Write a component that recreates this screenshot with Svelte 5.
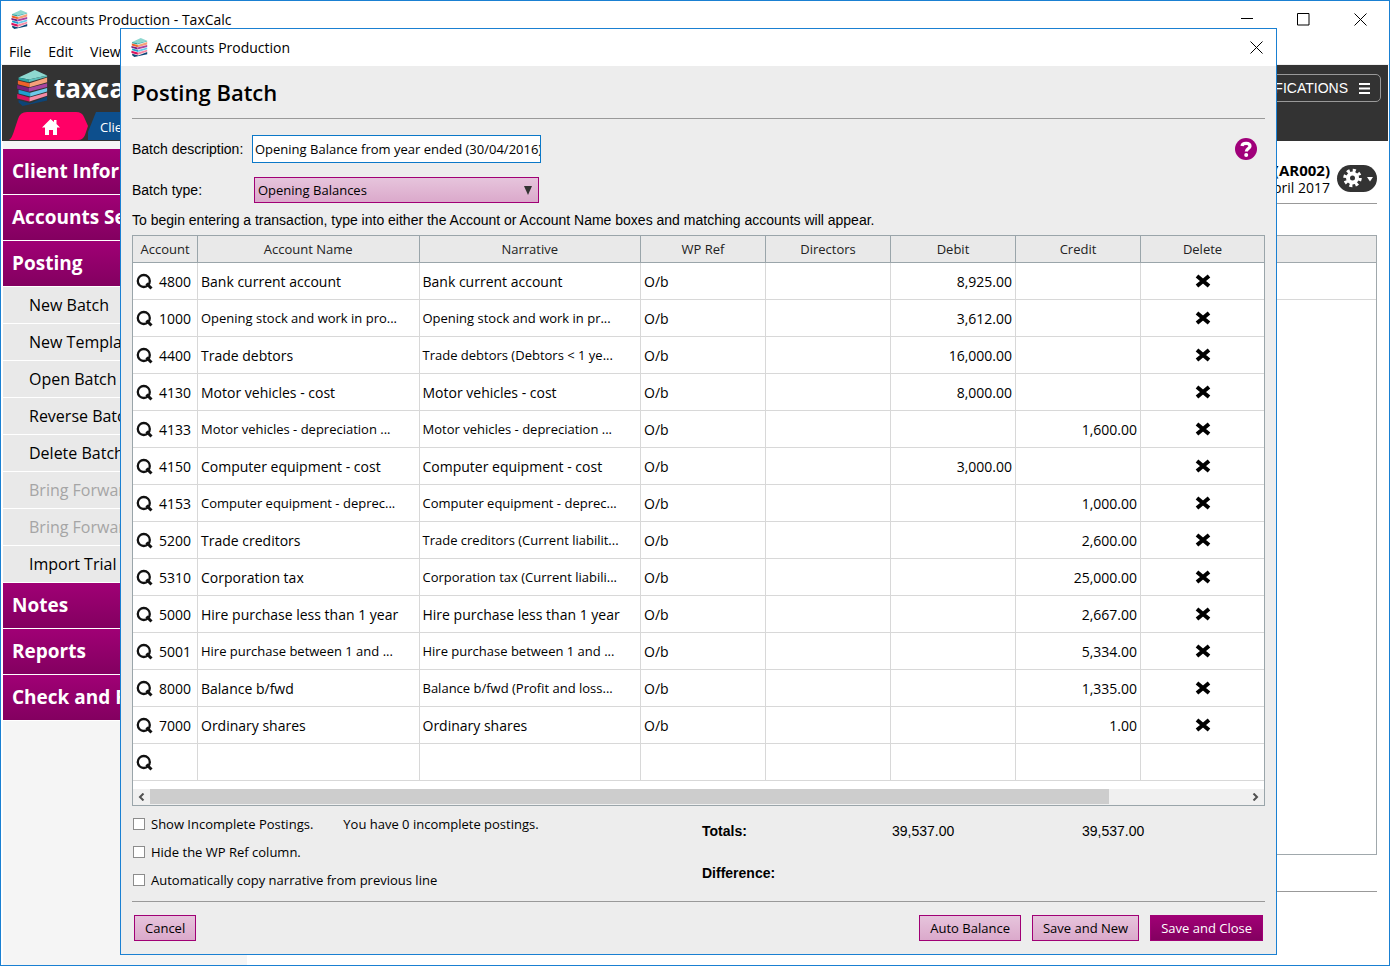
<script lang="ts">
	const menus = ['File', 'Edit', 'View'];

	const topSections = ['Client Information', 'Accounts Setup', 'Posting'];
	const postingItems = [
		{ label: 'New Batch' },
		{ label: 'New Template' },
		{ label: 'Open Batch' },
		{ label: 'Reverse Batch' },
		{ label: 'Delete Batch' },
		{ label: 'Bring Forward', disabled: true },
		{ label: 'Bring Forward', disabled: true },
		{ label: 'Import Trial' }
	];
	const bottomSections = ['Notes', 'Reports', 'Check and File'];

	const columns = ['Account', 'Account Name', 'Narrative', 'WP Ref', 'Directors', 'Debit', 'Credit', 'Delete'];

	const rows = [
		{ code: '4800', name: 'Bank current account', narrative: 'Bank current account', debit: '8,925.00', credit: '' },
		{ code: '1000', name: 'Opening stock and work in pro...', narrative: 'Opening stock and work in pr...', debit: '3,612.00', credit: '' },
		{ code: '4400', name: 'Trade debtors', narrative: 'Trade debtors (Debtors < 1 ye...', debit: '16,000.00', credit: '' },
		{ code: '4130', name: 'Motor vehicles - cost', narrative: 'Motor vehicles - cost', debit: '8,000.00', credit: '' },
		{ code: '4133', name: 'Motor vehicles - depreciation ...', narrative: 'Motor vehicles - depreciation ...', debit: '', credit: '1,600.00' },
		{ code: '4150', name: 'Computer equipment - cost', narrative: 'Computer equipment - cost', debit: '3,000.00', credit: '' },
		{ code: '4153', name: 'Computer equipment - deprec...', narrative: 'Computer equipment - deprec...', debit: '', credit: '1,000.00' },
		{ code: '5200', name: 'Trade creditors', narrative: 'Trade creditors (Current liabilit...', debit: '', credit: '2,600.00' },
		{ code: '5310', name: 'Corporation tax', narrative: 'Corporation tax (Current liabili...', debit: '', credit: '25,000.00' },
		{ code: '5000', name: 'Hire purchase less than 1 year', narrative: 'Hire purchase less than 1 year', debit: '', credit: '2,667.00' },
		{ code: '5001', name: 'Hire purchase between 1 and ...', narrative: 'Hire purchase between 1 and ...', debit: '', credit: '5,334.00' },
		{ code: '8000', name: 'Balance b/fwd', narrative: 'Balance b/fwd (Profit and loss...', debit: '', credit: '1,335.00' },
		{ code: '7000', name: 'Ordinary shares', narrative: 'Ordinary shares', debit: '', credit: '1.00' }
	];

	let description = $state('Opening Balance from year ended (30/04/2016)');
	let batchType = $state('Opening Balances');
	let showIncomplete = $state(false);
	let hideWpRef = $state(false);
	let copyNarrative = $state(false);
</script>

{#snippet logo(width: number, height: number)}
	<svg {width} {height} viewBox="0 0 90 106" aria-hidden="true">
		<path fill="#0d4577" d="M4 88 38 98 88 78V90L16 106 4 96z" />
		<path fill="#8ed8d0" d="M4 22 52 0 88 16 34 28z" />
		<path fill="#2fa39f" d="M4 22 34 28V36L4 29z" />
		<path fill="#5cbfba" d="M34 28 88 16V20L34 36z" />
		<path fill="#f0622a" d="M2 31 36 39V51L2 42z" />
		<path fill="#f6a07a" d="M36 39 88 22V36L36 51z" />
		<path fill="#7a1f7c" d="M0 44 34 53V64L0 55z" />
		<path fill="#a8449f" d="M34 53 88 39V50L34 64z" />
		<path fill="#1f9fd0" d="M4 58 38 67V78L4 69z" />
		<path fill="#6cc9ea" d="M38 67 88 53V63L38 78z" />
		<path fill="#d9145f" d="M0 71 36 81V93L0 84z" />
		<path fill="#f58aa5" d="M36 81 88 66V76L36 93z" />
	</svg>
{/snippet}

{#snippet cross()}
	<svg width="13" height="13" viewBox="0 0 13 13" aria-hidden="true">
		<path d="M.5 .5 12.5 12.5M12.5 .5 .5 12.5" fill="none" stroke="#000" />
	</svg>
{/snippet}

{#snippet lookup()}
	<button class="icon-button" aria-label="Find account">
		<svg width="17" height="17" viewBox="0 0 17 17" aria-hidden="true">
			<circle cx="7.800" cy="8" r="6" fill="none" stroke="#111" stroke-width="2.300" />
			<path d="M10.500 10.500 15.500 15.500" stroke="#111" stroke-width="3" />
		</svg>
	</button>
{/snippet}

<div class="desktop">
	<div class="window">
		<header class="titlebar">
			{@render logo(17, 19)}
			<span>Accounts Production - TaxCalc</span>
			<div class="controls">
				<button class="icon-button" aria-label="Minimise">
					<svg width="13" height="13" viewBox="0 0 13 13"><path d="M1 5.500H13" stroke="#000" /></svg>
				</button>
				<button class="icon-button" aria-label="Maximise">
					<svg width="13" height="13" viewBox="0 0 13 13"><path d="M.5 .5H12V12H.5z" fill="none" stroke="#000" /></svg>
				</button>
				<button class="icon-button" aria-label="Close window">{@render cross()}</button>
			</div>
		</header>

		<nav class="menubar">
			{#each menus as menu}
				<button>{menu}</button>
			{/each}
		</nav>

		<div class="banner">
			<div class="brand">
				{@render logo(31, 36)}
				<strong>taxcalc</strong>
				<button class="notifications">
					NOTIFICATIONS
					<svg width="11" height="11" viewBox="0 0 11 11" aria-hidden="true">
						<path d="M0 1H11M0 5.500H11M0 10H11" stroke="#fff" stroke-width="2" />
					</svg>
				</button>
			</div>
			<nav class="tabs">
				<a class="home" href="#home" aria-label="Home">
					<svg width="79" height="28" viewBox="0 0 79 28" aria-hidden="true">
						<path fill="#ff0066" d="M0 28C3 26 4 22 6 16L9 7Q11 0 18 0H67Q73 0 75 5L79 14 76 23Q74 28 69 28z" />
						<path fill="#fff" d="M41.500 7 33 15.500H36V23H40V18H44V23H48V15.500H51L47.500 12V8H45V10z" />
					</svg>
				</a>
				<a class="client" href="#client">Clients</a>
			</nav>
		</div>

		<div class="body">
			<nav class="sidebar">
				{#each topSections as section}
					<button class="section">{section}</button>
				{/each}
				{#each postingItems as item}
					<button class="item" disabled={item.disabled}>{item.label}</button>
				{/each}
				{#each bottomSections as section}
					<button class="section">{section}</button>
				{/each}
			</nav>

			<main>
				<div class="client-bar">
					<div class="period">
						<strong>(AR002)</strong>
						<span>30 April 2017</span>
					</div>
					<button class="settings" aria-label="Settings">
						<svg width="40" height="27" viewBox="0 0 40 27" aria-hidden="true">
							<circle cx="15.500" cy="13" r="4.500" fill="none" stroke="#fff" stroke-width="4" />
							<circle cx="15.500" cy="13" r="7.500" fill="none" stroke="#fff" stroke-width="3.500" stroke-dasharray="3 2.890" />
							<path d="M30 12H36L33 16.500z" fill="#fff" />
						</svg>
					</button>
				</div>
				<div class="list">
					<div class="list-head"></div>
					<div class="list-row"></div>
				</div>
				<hr />
			</main>
		</div>
	</div>

	<div class="dialog" role="dialog" aria-labelledby="dialog-title">
		<header class="titlebar">
			{@render logo(17, 19)}
			<span>Accounts Production</span>
			<div class="controls">
				<button class="icon-button" aria-label="Close dialog">{@render cross()}</button>
			</div>
		</header>

		<div class="content">
			<h1 id="dialog-title">Posting Batch</h1>

			<div class="field">
				<label for="description">Batch description:</label>
				<input id="description" type="text" bind:value={description} />
				<button class="icon-button help" aria-label="Help">
					<svg width="22" height="22" viewBox="0 0 22 22" aria-hidden="true">
						<circle cx="11" cy="11" r="11" fill="#a0007a" />
						<path d="M7 8C7.500 4.500 15 4.500 15 8.200 15 10.500 11.300 10.500 11.300 13.500" fill="none" stroke="#fff" stroke-width="3.200" />
						<circle cx="11.200" cy="17" r="2" fill="#fff" />
					</svg>
				</button>
			</div>

			<div class="field">
				<label for="batch-type">Batch type:</label>
				<div class="select">
					<select id="batch-type" bind:value={batchType}>
						<option>Opening Balances</option>
						<option>Journals</option>
					</select>
					<svg width="8" height="9" viewBox="0 0 8 9" aria-hidden="true"><path d="M0 0H8L4 9z" fill="#333" /></svg>
				</div>
			</div>

			<p class="hint">
				To begin entering a transaction, type into either the Account or Account Name boxes and matching accounts will appear.
			</p>

			<div class="grid">
				<table>
					<colgroup>
						<col class="code-col" />
						<col />
						<col />
						<col class="value-col" />
						<col class="value-col" />
						<col class="value-col" />
						<col class="value-col" />
						<col class="delete-col" />
					</colgroup>
					<thead>
						<tr>
							{#each columns as column}
								<th scope="col">{column}</th>
							{/each}
						</tr>
					</thead>
					<tbody>
						{#each rows as row}
							<tr>
								<td><div class="code">{@render lookup()}{row.code}</div></td>
								<td class:elided={row.name.endsWith('...')}>{row.name}</td>
								<td class:elided={row.narrative.endsWith('...')}>{row.narrative}</td>
								<td>O/b</td>
								<td></td>
								<td class="amount">{row.debit}</td>
								<td class="amount">{row.credit}</td>
								<td class="delete">
									<button class="icon-button" aria-label="Delete {row.code}">
										<svg width="16" height="14" viewBox="0 0 16 14" aria-hidden="true">
											<path d="M2 2 14 12M14 2 2 12" stroke="#000" stroke-width="4" />
										</svg>
									</button>
								</td>
							</tr>
						{/each}
						<tr>
							<td><div class="code">{@render lookup()}</div></td>
							<td></td>
							<td></td>
							<td></td>
							<td></td>
							<td></td>
							<td></td>
							<td></td>
						</tr>
					</tbody>
				</table>

				<div class="scrollbar">
					<button class="icon-button" aria-label="Scroll left">
						<svg width="7" height="8" viewBox="0 0 7 8"><path d="M5.500 .5 2 4 5.500 7.500" fill="none" stroke="#505050" stroke-width="2" /></svg>
					</button>
					<div class="track"><div class="thumb"></div></div>
					<button class="icon-button" aria-label="Scroll right">
						<svg width="7" height="8" viewBox="0 0 7 8"><path d="M1.500 .5 5 4 1.500 7.500" fill="none" stroke="#505050" stroke-width="2" /></svg>
					</button>
				</div>
			</div>

			<div class="summary">
				<div class="options">
					<div class="option">
						<label><input type="checkbox" bind:checked={showIncomplete} />Show Incomplete Postings.</label>
						<span>You have 0 incomplete postings.</span>
					</div>
					<div class="option">
						<label><input type="checkbox" bind:checked={hideWpRef} />Hide the WP Ref column.</label>
					</div>
					<div class="option">
						<label><input type="checkbox" bind:checked={copyNarrative} />Automatically copy narrative from previous line</label>
					</div>
				</div>
				<div class="totals">
					<strong>Totals:</strong>
					<span>39,537.00</span>
					<span>39,537.00</span>
					<strong>Difference:</strong>
				</div>
			</div>

			<footer>
				<button class="action">Cancel</button>
				<div class="group">
					<button class="action">Auto Balance</button>
					<button class="action">Save and New</button>
					<button class="action primary">Save and Close</button>
				</div>
			</footer>
		</div>
	</div>
</div>

<style>
	:global(body) {
		margin: 0;
		background: #fff;
	}

	.desktop {
		position: relative;
		box-sizing: border-box;
		min-height: 100vh;
		padding: 0 4px 8px 0;
		display: flex;
		font-family: 'Open Sans', 'Noto Sans', sans-serif;
		font-size: 14px;
		color: #000;
	}

	button,
	input,
	select {
		font: inherit;
		color: inherit;
		box-sizing: border-box;
		margin: 0;
	}

	button {
		padding: 0;
		border: 0;
		background: none;
		white-space: nowrap;
	}

	svg {
		display: block;
		flex: none;
	}

	.icon-button {
		display: flex;
		align-items: center;
		justify-content: center;
	}

	/* Main window */
	.window {
		flex: 1;
		min-width: 0;
		display: flex;
		flex-direction: column;
		border: 1px solid #1a80d2;
	}

	.titlebar {
		display: flex;
		align-items: center;
		gap: 7px;
		height: 37px;
		padding: 0 22px 0 10px;
		background: #fff;
	}

	.controls {
		display: flex;
		gap: 44px;
		margin-left: auto;
	}

	.menubar {
		display: flex;
		gap: 17px;
		height: 26px;
		padding: 0 8px;
		border-bottom: 1px solid #f0f0f0;
	}

	.banner {
		display: flex;
		flex-direction: column;
		justify-content: space-between;
		height: 76px;
		margin: 0 1px;
		background: #333;
		color: #fff;
	}

	.brand {
		display: flex;
		align-items: center;
		gap: 6px;
		height: 46px;
		padding: 0 7px 0 15px;
	}

	.brand strong {
		font-size: 26px;
		line-height: 40px;
	}

	.notifications {
		display: flex;
		align-items: center;
		gap: 11px;
		height: 28px;
		margin-left: auto;
		padding: 0 10px;
		border: 1px solid #999;
		border-radius: 5px;
		font-family: 'Liberation Sans', Arial, sans-serif;
	}

	.tabs {
		display: flex;
		height: 29px;
		padding-left: 7px;
	}

	.client {
		height: 28px;
		padding: 0 24px 0 12px;
		background: #0d4f8d;
		clip-path: polygon(8px 0, 100% 0, 100% 100%, 0 100%, 0 20px);
		color: #fff;
		font-size: 13px;
		line-height: 30px;
		text-decoration: none;
	}

	.body {
		flex: 1;
		display: flex;
		padding: 0 12px 0 2px;
	}

	.sidebar {
		display: flex;
		flex-direction: column;
		width: 244px;
		padding-top: 8px;
		background: #f5f5f5;
	}

	.section {
		height: 46px;
		padding: 0 9px 2px;
		border-bottom: 1px solid #fff;
		background: linear-gradient(#a00075, #830060);
		color: #fff;
		font-size: 19px;
		font-weight: 700;
		text-align: left;
	}

	.item {
		height: 37px;
		padding: 0 26px;
		border-bottom: 1px solid #fff;
		background: #e9e9e9;
		font-size: 16px;
		text-align: left;
	}

	.item:disabled {
		color: #a5a5a5;
	}

	main {
		flex: 1;
		display: flex;
		flex-direction: column;
	}

	.client-bar {
		display: flex;
		align-items: center;
		justify-content: flex-end;
		gap: 7px;
		height: 62px;
		border-bottom: 1px solid #999;
	}

	.period {
		display: flex;
		flex-direction: column;
		padding-top: 14px;
		line-height: 17px;
		text-align: right;
	}

	.period strong {
		font-size: 15px;
	}

	.settings {
		margin-top: 13px;
		border-radius: 14px;
		background: #333;
	}

	.list {
		flex: 1;
		margin-top: 31px;
		border: 1px solid #a0a8ac;
	}

	.list-head {
		height: 26px;
		border-bottom: 1px solid #a0a8ac;
		background: #e9e9e9;
	}

	.list-row {
		height: 36px;
		border-bottom: 1px solid #d8d8d8;
	}

	main hr {
		width: 100%;
		height: 1px;
		margin: 36px 0 73px;
		border: 0;
		background: #999;
	}

	/* Posting dialog */
	.dialog {
		position: absolute;
		top: 28px;
		left: 120px;
		right: 117px;
		border: 1px solid #1a80d2;
		background: #ededed;
	}

	.dialog .titlebar {
		padding-right: 13px;
	}

	.content {
		padding: 0 11px 13px;
	}

	h1 {
		margin: 0 0 16px;
		border-bottom: 1px solid #999;
		font-size: 22px;
		font-weight: 600;
		line-height: 52px;
	}

	.field {
		display: flex;
		align-items: center;
		margin-bottom: 14px;
	}

	.field label {
		width: 120px;
		font-family: 'Liberation Sans', Arial, sans-serif;
	}

	.field input {
		width: 289px;
		height: 28px;
		padding: 0 0 0 2px;
		border: 1px solid #0b78c8;
		background: #fff;
		font-size: 13px;
	}

	.help {
		margin: 0 8px 0 auto;
	}

	.select {
		position: relative;
		margin-left: 2px;
	}

	.select select {
		display: block;
		width: 285px;
		height: 26px;
		padding: 0 3px;
		appearance: none;
		border: 1px solid #a00075;
		border-radius: 0;
		background: linear-gradient(#e6c4dc, #dba9cb);
		font-size: 13px;
	}

	.select svg {
		position: absolute;
		top: 9px;
		right: 7px;
		pointer-events: none;
	}

	.hint {
		margin: -14px 0 0;
		padding: 8px 0 6px;
		font-family: 'Liberation Sans', Arial, sans-serif;
		line-height: 18px;
		white-space: nowrap;
	}

	.grid {
		border: 1px solid #9aa5aa;
		background: #fff;
	}

	table {
		width: 100%;
		table-layout: fixed;
		border-collapse: separate;
		border-spacing: 0;
	}

	.code-col {
		width: 65px;
	}

	.value-col {
		width: 125px;
	}

	.delete-col {
		width: 123px;
	}

	th {
		box-sizing: border-box;
		height: 27px;
		padding: 0;
		border-right: 1px solid #9aa5aa;
		border-bottom: 1px solid #9aa5aa;
		background: #e9e9e9;
		color: #222;
		font-size: 13px;
		font-weight: 400;
	}

	td {
		box-sizing: border-box;
		height: 37px;
		padding: 0 3px;
		border-right: 1px solid #d8d8d8;
		border-bottom: 1px solid #d8d8d8;
		overflow: hidden;
		white-space: nowrap;
	}

	th:last-child,
	td:last-child {
		border-right: 0;
	}

	.elided {
		font-size: 13px;
	}

	.code {
		display: flex;
		align-items: center;
		gap: 6px;
	}

	.amount {
		text-align: right;
	}

	.delete button {
		margin: 0 auto;
	}

	.scrollbar {
		display: flex;
		height: 16px;
		margin-top: 8px;
		background: #f0f0f0;
	}

	.scrollbar button {
		width: 17px;
	}

	.track {
		flex: 1;
	}

	.thumb {
		width: 87.4%;
		height: 15px;
		background: #cdcdcd;
	}

	.summary {
		display: flex;
		padding: 4px 0 7px;
		border-bottom: 1px solid #999;
	}

	.options {
		flex: 1;
		font-size: 13px;
	}

	.option {
		display: flex;
		align-items: center;
		gap: 30px;
		height: 28px;
	}

	.option label {
		display: flex;
		align-items: center;
		gap: 6px;
	}

	.option input {
		width: 12px;
		height: 12px;
		margin-left: 1px;
		appearance: none;
		border: 1px solid #8c8c8c;
		background: #fff;
	}

	.option input:checked {
		background: #a00075;
	}

	.totals {
		display: grid;
		grid-template-columns: 190px 190px 183px;
		grid-auto-rows: 42px;
		align-items: center;
		font-family: 'Liberation Sans', Arial, sans-serif;
	}

	footer {
		display: flex;
		justify-content: space-between;
		padding: 13px 2px 0;
	}

	.group {
		display: flex;
		gap: 11px;
	}

	.action {
		height: 26px;
		padding: 0 10px;
		border: 1px solid #a00075;
		background: linear-gradient(#e6c4dc, #dba9cb);
		font-size: 13px;
	}

	.primary {
		background: linear-gradient(#a00075, #830060);
		color: #fff;
	}
</style>
